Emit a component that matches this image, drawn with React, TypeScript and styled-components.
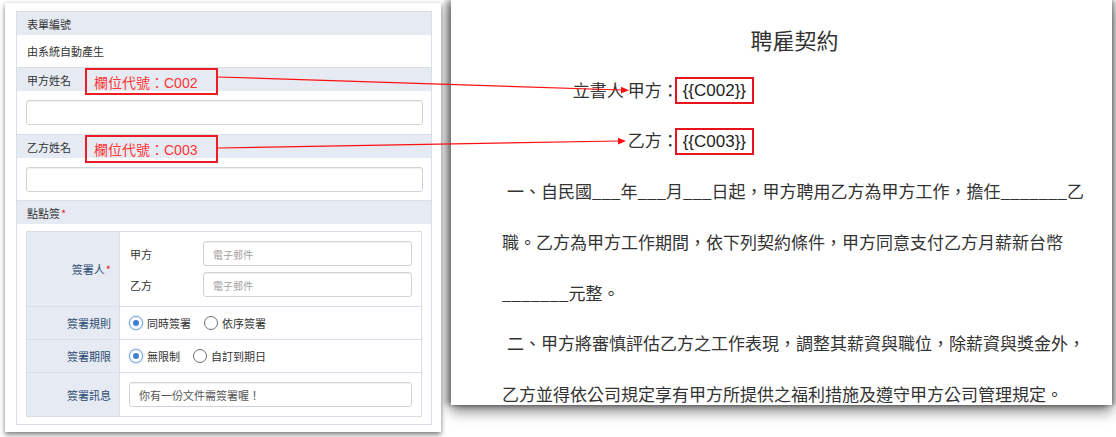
import React from 'react';
import styled, { createGlobalStyle } from 'styled-components';

const Global = createGlobalStyle`
  html, body { margin: 0; padding: 0; background: #fff; }
  body {
    width: 1116px; height: 437px; overflow: hidden;
    font-family: "Noto Sans CJK TC", "Noto Sans", sans-serif;
  }
`;

const Page = styled.div`
  position: relative;
  width: 1116px;
  height: 437px;
  display: flex;
  align-items: flex-start;
  background: #fff;
`;

const FormCard = styled.div`
  position: relative;
  z-index: 2;
  margin: 3px 0 0 5px;
  width: 436px;
  height: 429px;
  box-sizing: border-box;
  padding: 8px 9px 0 11px;
  background: #fff;
  box-shadow: 0 3px 5px rgba(0, 0, 0, 0.45), 0 0 4px rgba(0, 0, 0, 0.12);
`;

const Panel = styled.div`
  border: 1px solid #d9dfe8;
  height: 414px;
  box-sizing: border-box;
  display: flex;
  flex-direction: column;
  font-size: 11px;
  color: #333;
`;

const SectionHeader = styled.div<{ $first?: boolean }>`
  position: relative;
  height: 23px;
  flex: none;
  display: flex;
  align-items: center;
  padding-left: 10px;
  background: #e6ebf3;
  border-top: ${p => (p.$first ? 'none' : '1px solid #d9dfe8')};
  color: #333;
`;

const Req = styled.span`
  color: #e0262c;
  margin-left: 1px;
`;

const ValueRow = styled.div`
  height: 32px;
  flex: none;
  display: flex;
  align-items: center;
  padding-left: 10px;
  color: #333;
`;

const InputRow = styled.div<{ $h: number }>`
  height: ${p => p.$h}px;
  box-sizing: border-box;
  flex: none;
  display: flex;
  align-items: center;
  padding: 0 8px 0 9px;
`;

const TextInput = styled.input`
  width: 100%;
  height: 25px;
  box-sizing: border-box;
  border: 1px solid #cfd3d9;
  border-radius: 3px;
  background: #fff;
  box-shadow: inset 0 1px 1px rgba(0, 0, 0, 0.06);
  padding: 0 9px;
  font-family: "Noto Sans CJK TC", sans-serif;
  font-size: 11px;
  color: #555;
  outline: none;
  &::placeholder { color: #a0a0a0; font-size: 10px; }
`;

const SignBody = styled.div`
  flex: 1;
  padding: 7px 9px 0 9px;
`;

const SignTable = styled.div`
  display: grid;
  grid-template-columns: 93px 1fr;
  border: 1px solid #d9dfe8;
`;

const LabelCell = styled.div<{ $last?: boolean }>`
  background: #e6ebf3;
  display: flex;
  align-items: center;
  justify-content: flex-end;
  padding-right: 8px;
  color: #2c4a72;
  border-right: 1px solid #d9dfe8;
  border-bottom: ${p => (p.$last ? 'none' : '1px solid #d9dfe8')};
`;

const ValueCell = styled.div<{ $h: number; $last?: boolean }>`
  height: ${p => p.$h}px;
  box-sizing: border-box;
  display: flex;
  flex-direction: column;
  justify-content: center;
  gap: 6px;
  padding: 0 9px 0 9px;
  border-bottom: ${p => (p.$last ? 'none' : '1px solid #d9dfe8')};
`;

const SignerLine = styled.div`
  display: flex;
  align-items: center;
  padding-left: 1px;
`;

const SignerName = styled.span`
  width: 73px;
  flex: none;
  color: #333;
`;

const RadioGroup = styled.div`
  display: flex;
  align-items: center;
`;

const RadioItem = styled.label`
  display: flex;
  align-items: center;
  margin-right: 13px;
  color: #333;
`;

const RadioCircle = styled.span<{ $on?: boolean }>`
  width: 14px;
  height: 14px;
  box-sizing: border-box;
  border-radius: 50%;
  border: 1px solid ${p => (p.$on ? '#7fa6dc' : '#6d6d6d')};
  box-shadow: ${p => (p.$on ? '0 0 2px rgba(70,130,210,0.6)' : 'none')};
  display: flex;
  align-items: center;
  justify-content: center;
  margin-right: 4px;
  background: #fff;
  &::after {
    content: '';
    display: ${p => (p.$on ? 'block' : 'none')};
    width: 6px;
    height: 6px;
    border-radius: 50%;
    background: #3d7fd6;
  }
`;

const Annot = styled.div<{ $h: number }>`
  position: absolute;
  left: 68px;
  top: 0;
  width: 133px;
  height: ${p => p.$h}px;
  box-sizing: border-box;
  border: 2px solid #ee1c25;
  padding-left: 7px;
  display: flex;
  align-items: center;
  font-family: "Liberation Sans", "Noto Sans CJK TC", sans-serif;
  font-size: 14px;
  color: #ff3535;
  background: transparent;
`;

const Doc = styled.div`
  position: relative;
  z-index: 1;
  margin-left: 10px;
  width: 661px;
  height: 405px;
  box-sizing: border-box;
  padding: 14px 30px 0 51px;
  background: #fff;
  box-shadow: 0 7px 12px rgba(0, 0, 0, 0.45), -5px 0 6px rgba(0, 0, 0, 0.4), 3px 0 4px rgba(0, 0, 0, 0.35);
  font-family: "Noto Sans CJK TC", sans-serif;
  font-size: 17px;
  line-height: 50.7px;
  color: #333;
`;

const Title = styled.div`
  text-align: center;
  padding-left: 5px;
  font-size: 22px;
`;

const PartyLine = styled.div`
  width: 252px;
  text-align: right;
  white-space: nowrap;
`;

const FieldBox = styled.span`
  display: inline-block;
  vertical-align: middle;
  line-height: 23px;
  padding: 0 6px 0 6px;
  border: 2px solid #e8141b;
  font-family: "Liberation Sans", sans-serif;
  font-size: 17px;
  color: #222;
  margin-left: -4px;
  margin-top: -3px;
`;

const Line = styled.div<{ $indent?: number }>`
  white-space: nowrap;
  padding-left: ${p => p.$indent ?? 0}px;
`;

const Overlay = styled.svg`
  position: absolute;
  left: 0;
  top: 0;
  z-index: 5;
  pointer-events: none;
`;

export default function App() {
  return (
    <>
      <Global />
      <Page lang="zh-Hant-TW">
        <FormCard>
          <Panel>
            <SectionHeader $first>表單編號</SectionHeader>
            <ValueRow>由系統自動產生</ValueRow>
            <SectionHeader>
              甲方姓名
              <Annot $h={27}>欄位代號：C002</Annot>
            </SectionHeader>
            <InputRow $h={43}>
              <TextInput readOnly />
            </InputRow>
            <SectionHeader>
              乙方姓名
              <Annot $h={28}>欄位代號：C003</Annot>
            </SectionHeader>
            <InputRow $h={42}>
              <TextInput readOnly />
            </InputRow>
            <SectionHeader>
              點點簽<Req>*</Req>
            </SectionHeader>
            <SignBody>
              <SignTable>
                <LabelCell>
                  簽署人<Req>*</Req>
                </LabelCell>
                <ValueCell $h={75}>
                  <SignerLine>
                    <SignerName>甲方</SignerName>
                    <TextInput readOnly placeholder="電子郵件" />
                  </SignerLine>
                  <SignerLine>
                    <SignerName>乙方</SignerName>
                    <TextInput readOnly placeholder="電子郵件" />
                  </SignerLine>
                </ValueCell>
                <LabelCell>簽署規則</LabelCell>
                <ValueCell $h={33}>
                  <RadioGroup>
                    <RadioItem>
                      <RadioCircle $on />
                      同時簽署
                    </RadioItem>
                    <RadioItem>
                      <RadioCircle />
                      依序簽署
                    </RadioItem>
                  </RadioGroup>
                </ValueCell>
                <LabelCell>簽署期限</LabelCell>
                <ValueCell $h={33}>
                  <RadioGroup>
                    <RadioItem>
                      <RadioCircle $on />
                      無限制
                    </RadioItem>
                    <RadioItem>
                      <RadioCircle />
                      自訂到期日
                    </RadioItem>
                  </RadioGroup>
                </ValueCell>
                <LabelCell $last>簽署訊息</LabelCell>
                <ValueCell $h={43} $last>
                  <TextInput readOnly defaultValue="你有一份文件需簽署喔！" />
                </ValueCell>
              </SignTable>
            </SignBody>
          </Panel>
        </FormCard>

        <Doc>
          <Title>聘雇契約</Title>
          <PartyLine>
            立書人 甲方：<FieldBox>{'{{C002}}'}</FieldBox>
          </PartyLine>
          <PartyLine>
            乙方：<FieldBox>{'{{C003}}'}</FieldBox>
          </PartyLine>
          <Line $indent={5}>一、自民國___年___月___日起，甲方聘用乙方為甲方工作，擔任_______乙</Line>
          <Line>職。乙方為甲方工作期間，依下列契約條件，甲方同意支付乙方月薪新台幣</Line>
          <Line>_______元整。</Line>
          <Line $indent={5}>二、甲方將審慎評估乙方之工作表現，調整其薪資與職位，除薪資與獎金外，</Line>
          <Line>乙方並得依公司規定享有甲方所提供之福利措施及遵守甲方公司管理規定。</Line>
        </Doc>

        <Overlay width="1116" height="437" viewBox="0 0 1116 437">
          <line x1="218" y1="77" x2="622" y2="90" stroke="#ff1010" strokeWidth="1.2" />
          <polygon points="629,90.2 621,86.8 621,93.4" fill="#ff1010" />
          <line x1="218" y1="148" x2="619" y2="141" stroke="#ff1010" strokeWidth="1.2" />
          <polygon points="626,141 618,137.8 618,144.4" fill="#ff1010" />
        </Overlay>
      </Page>
    </>
  );
}
